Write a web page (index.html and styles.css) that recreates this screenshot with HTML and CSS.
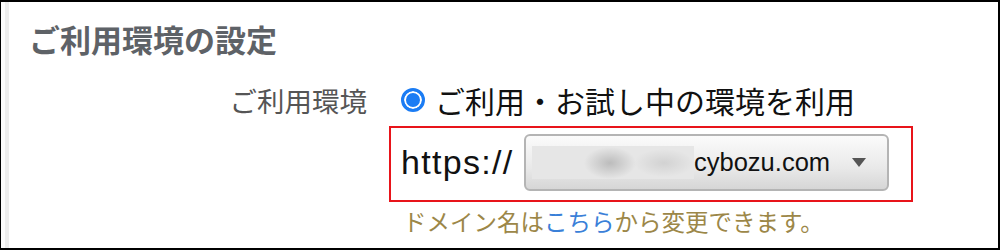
FILE: index.html
```html
<!DOCTYPE html>
<html lang="ja">
<head>
  <meta charset="UTF-8" />
  <meta name="viewport" content="width=device-width, initial-scale=1.0">
  <title>ご利用環境の設定</title>
  <link rel="stylesheet" href="styles.css">
</head>
<body>

  <div class="frame">
    <h2 class="section-title">ご利用環境の設定</h2>

    <div class="field">
      <div class="field-label">ご利用環境</div>
      <div class="field-body">
        <label class="radio-row">
          <span class="radio"></span>
          ご利用・お試し中の環境を利用
        </label>

        <div class="url-box">
          <span class="scheme">https://</span>
          <div class="select">
            <span class="blur"></span>
            <span class="domain">cybozu.com</span>
            <span class="arrow"></span>
          </div>
        </div>

        <p class="hint">ドメイン名は<a href="#">こちら</a>から変更できます。</p>
      </div>
    </div>
  </div>

</body>
</html>
```

FILE: styles.css
```css
html, body {
  margin: 0;
  padding: 0;
  background: #fff;
}

body {
  font-family: "Noto Sans CJK JP", "Noto Sans", sans-serif;
}

.frame {
  width: 1000px;
  height: 250px;
  box-sizing: border-box;
  border: 2px solid #000;
  border-left-width: 1px;
  box-shadow: inset 4px 0 0 #fcfcfc, inset 8px 0 0 #ededed;
  overflow: hidden;
}

.section-title {
  margin: 21px 0 0 28px;
  font-size: 31px;
  line-height: 31px;
  font-weight: bold;
  color: #5e6267;
}

.field {
  display: flex;
  margin-top: 28px;
}

.field-label {
  width: 366px;
  text-align: right;
  font-size: 27.5px;
  line-height: 36px;
  color: #555;
}

.field-body {
  margin-left: 22px;
}

.radio-row {
  display: flex;
  align-items: center;
  gap: 10px;
  height: 36px;
  padding-left: 12px;
  font-size: 30px;
  color: #111;
}

.radio {
  width: 24px;
  height: 24px;
  box-sizing: border-box;
  border: 3px solid #1b7cf4;
  border-radius: 50%;
  background: #1b7cf4;
  box-shadow: inset 0 0 0 2px #fff;
}

.url-box {
  display: flex;
  align-items: center;
  width: 524px;
  height: 76px;
  box-sizing: border-box;
  margin-top: 8px;
  padding: 6px 0 9px 10px;
  border: 2px solid #e8141a;
}

.scheme {
  font-family: "Liberation Sans", Arial, sans-serif;
  font-size: 34px;
  letter-spacing: 1.3px;
  color: #111;
  width: 123px;
}

.select {
  display: flex;
  align-items: center;
  width: 365px;
  height: 57px;
  box-sizing: border-box;
  border: 2px solid #b4b4b4;
  border-radius: 6px;
  background: linear-gradient(#fbfbfb, #e9e9e9 60%, #d6d6d6);
  padding-left: 6px;
}

.blur {
  width: 162px;
  height: 33px;
  background:
    radial-gradient(ellipse 26px 16px at 78px 17px, #bcbcbc, rgba(220, 220, 220, 0)),
    radial-gradient(ellipse 30px 14px at 132px 17px, #d2d2d2, rgba(228, 228, 228, 0)),
    #e6e6e6;
}

.domain {
  font-family: "Liberation Sans", Arial, sans-serif;
  font-size: 25.5px;
  color: #111;
}

.arrow {
  margin-left: 22px;
  width: 0;
  height: 0;
  border-left: 7px solid transparent;
  border-right: 7px solid transparent;
  border-top: 9px solid #555;
}

.hint {
  margin: 4px 0 0 14px;
  font-size: 23.5px;
  line-height: 30px;
  color: #9c8748;
}

.hint a {
  color: #3a80d8;
  text-decoration: none;
}
```
